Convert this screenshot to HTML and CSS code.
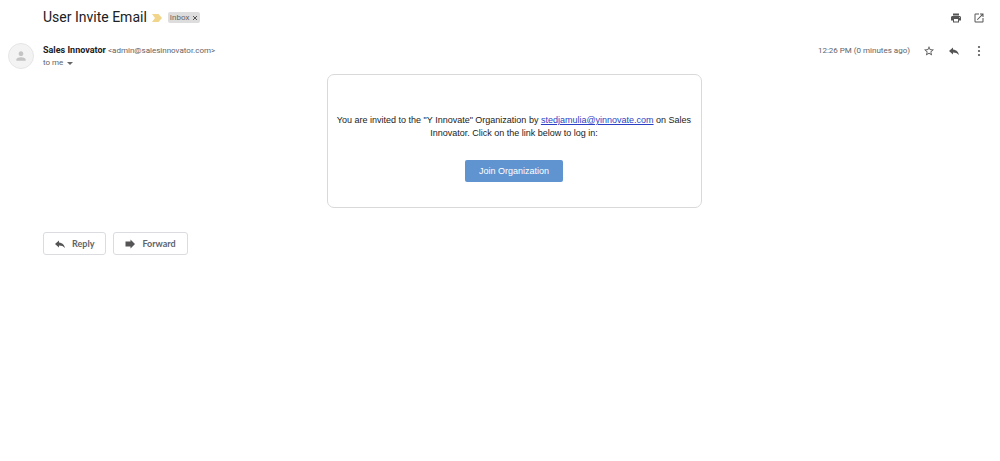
FILE: index.html
```html
<!DOCTYPE html>
<html lang="en">
<head>
<meta charset="utf-8">
<title>User Invite Email</title>
<link rel="stylesheet" href="styles.css">
</head>
<body>
<main class="message">
  <header class="subject-row">
    <h1 class="subject">User Invite Email</h1>
    <svg class="marker" viewBox="0 0 10 8" aria-hidden="true"><path d="M0 0h6.500L10 4 6.500 8H0l3-4z"/></svg>
    <span class="label">Inbox <button class="label-remove" type="button" aria-label="Remove label"><svg class="remove-icon" viewBox="0 0 6 6" aria-hidden="true"><path d="M1 1l4 4M5 1L1 5"/></svg></button></span>
    <div class="tools">
      <button class="icon-button" type="button" aria-label="Print"><svg class="icon" viewBox="0 0 24 24"><path d="M19 8H5c-1.660 0-3 1.340-3 3v6h4v4h12v-4h4v-6c0-1.660-1.340-3-3-3zm-3 11H8v-5h8v5zm3-7c-.55 0-1-.45-1-1s.45-1 1-1 1 .45 1 1-.45 1-1 1zm-1-9H6v4h12V3z"/></svg></button>
      <button class="icon-button" type="button" aria-label="Open in new window"><svg class="icon" viewBox="0 0 24 24"><path d="M19 19H5V5h7V3H5a2 2 0 0 0-2 2v14a2 2 0 0 0 2 2h14c1.100 0 2-.9 2-2v-7h-2v7zM14 3v2h3.590l-9.830 9.830 1.410 1.410L19 6.410V10h2V3h-7z"/></svg></button>
    </div>
  </header>

  <section class="sender-row">
    <div class="avatar"><svg class="avatar-icon" viewBox="0 0 24 24" aria-hidden="true"><path d="M12 12c2.210 0 4-1.790 4-4s-1.790-4-4-4-4 1.790-4 4 1.790 4 4 4zm0 2c-2.670 0-8 1.340-8 4v2h16v-2c0-2.660-5.330-4-8-4z"/></svg></div>
    <div class="sender">
      <div class="from"><strong class="name">Sales Innovator</strong> <span class="address">&lt;admin@salesinnovator.com&gt;</span></div>
      <button class="recipient" type="button">to me <span class="caret"></span></button>
    </div>
    <div class="meta">
      <time class="date">12:26 PM (0 minutes ago)</time>
      <div class="tools">
        <button class="icon-button" type="button" aria-label="Star"><svg class="icon" viewBox="0 0 24 24"><path d="M22 9.240l-7.190-.62L12 2 9.190 8.630 2 9.240l5.460 4.730L5.820 21 12 17.270 18.180 21l-1.630-7.030L22 9.240zM12 15.400l-3.760 2.270 1-4.280-3.320-2.880 4.380-.38L12 6.100l1.710 4.040 4.380.38-3.320 2.880 1 4.280L12 15.400z"/></svg></button>
        <button class="icon-button" type="button" aria-label="Reply"><svg class="icon" viewBox="0 0 24 24"><path d="M10 9V5l-8 7 8 7v-4.100c5 0 9 1.600 12 5.100-1-5-4-10-12-11z"/></svg></button>
        <button class="icon-button" type="button" aria-label="More"><svg class="icon" viewBox="0 0 24 24"><circle cx="12" cy="4" r="2.200"/><circle cx="12" cy="12" r="2.200"/><circle cx="12" cy="20" r="2.200"/></svg></button>
      </div>
    </div>
  </section>

  <section class="body">
    <article class="card">
      <p class="invite">You are invited to the "Y Innovate" Organization by <a class="link" href="mailto:stedjamulia@yinnovate.com">stedjamulia@yinnovate.com</a> on Sales Innovator. Click on the link below to log in:</p>
      <a class="join" href="#join">Join Organization</a>
    </article>
  </section>

  <footer class="actions">
    <button class="action" type="button"><svg class="icon" viewBox="0 0 24 24" aria-hidden="true"><path d="M10 9V5l-8 7 8 7v-4.100c5 0 9 1.600 12 5.100-1-5-4-10-12-11z"/></svg>Reply</button>
    <button class="action" type="button"><svg class="icon" viewBox="0 0 24 24" aria-hidden="true"><path d="M3 7h10V3l9 9-9 9v-4H3z"/></svg>Forward</button>
  </footer>
</main>
</body>
</html>
```
FILE: styles.css
```css
* {
  box-sizing: border-box;
}

body {
  margin: 0;
  background: #fff;
  color: #202124;
  font-family: Roboto, "Liberation Sans", sans-serif;
  font-size: 9px;
}

button {
  padding: 0;
  border: 0;
  background: none;
  color: inherit;
  font: inherit;
  cursor: pointer;
}

.message {
  padding: 8px 15px 8px 8px;
}

.subject-row {
  display: flex;
  align-items: center;
  height: 19px;
  padding-left: 35px;
}

.subject {
  margin: 0;
  font-size: 14px;
  font-weight: 400;
  line-height: 19px;
}

.marker {
  width: 10px;
  height: 8px;
  margin: 0 6px 0 5px;
  fill: #f0d58a;
}

.label {
  display: flex;
  align-items: center;
  gap: 3px;
  height: 11px;
  padding: 0 2px;
  border-radius: 2px;
  background: #ddd;
  color: #666;
  font-size: 8px;
  line-height: 11px;
}

.label-remove {
  display: flex;
}

.remove-icon {
  width: 6px;
  height: 6px;
  stroke: #555;
}

.tools {
  display: flex;
  gap: 13px;
}

.subject-row .tools {
  gap: 11px;
  margin-left: auto;
}

.icon-button {
  display: flex;
}

.icon {
  width: 12px;
  height: 12px;
  fill: #555;
}

.sender-row {
  display: flex;
  align-items: flex-start;
  margin-top: 16px;
}

.avatar {
  display: flex;
  align-items: center;
  justify-content: center;
  width: 26px;
  height: 26px;
  border: 1px solid #e6e6e6;
  border-radius: 50%;
  background: #f3f3f3;
}

.avatar-icon {
  width: 14px;
  height: 14px;
  fill: #c4c4c4;
}

.sender {
  flex: 1;
  margin-left: 9px;
  padding-top: 1px;
}

.from {
  line-height: 13px;
}

.name {
  font-weight: 700;
}

.address,
.recipient,
.date {
  color: #5f6368;
  font-size: 8px;
}

.recipient {
  display: flex;
  align-items: center;
  gap: 4px;
  line-height: 12px;
}

.caret {
  border: 3px solid transparent;
  border-top-color: #666;
  border-bottom: 0;
}

.meta {
  display: flex;
  align-items: center;
  gap: 13px;
  padding-top: 1px;
}

.date {
  line-height: 13px;
}

.body {
  padding: 5px 0 0 35px;
}

.card {
  max-width: 375px;
  margin: 0 auto;
  padding: 39px 8px 25px;
  border: 1px solid #d9d9d9;
  border-radius: 7px;
  font-family: "Liberation Sans", Arial, sans-serif;
  text-align: center;
}

.invite {
  margin: 0 0 20px;
  color: #222;
  line-height: 13px;
}

.link {
  color: #2b3fc4;
}

.join {
  display: inline-block;
  padding: 0 14px;
  border-radius: 2px;
  background: #5f94d1;
  color: #fff;
  line-height: 22px;
  text-decoration: none;
}

.actions {
  display: flex;
  gap: 7px;
  padding: 24px 0 0 35px;
}

.action {
  display: flex;
  align-items: center;
  gap: 6px;
  height: 23px;
  padding: 0 11px 0 10px;
  border: 1px solid #dadce0;
  border-radius: 3px;
  color: #5f6368;
  font-family: Lato, Roboto, sans-serif;
  font-size: 9px;
  font-weight: 700;
}
```
